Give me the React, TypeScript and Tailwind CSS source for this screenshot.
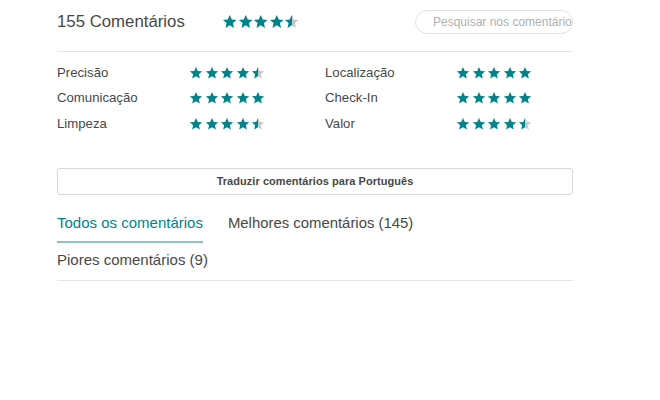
import React, { useId } from "react";

const STAR = "M12 1.5l3.1 6.9 7.4.7-5.6 5 1.7 7.4L12 17.6l-6.6 3.9 1.7-7.4-5.6-5 7.4-.7z";

function Star({ fill, size }: { fill: number; size: number }) {
  const id = useId().replace(/:/g, "");
  return (
    <svg width={size} height={size} viewBox="0 0 24 24" className="block">
      <defs>
        <linearGradient id={id} x1="0" x2="1" y1="0" y2="0">
          <stop offset={fill} stopColor="#008489" />
          <stop offset={fill} stopColor="#c8c8c8" />
        </linearGradient>
      </defs>
      <path d={STAR} fill={`url(#${id})`} />
    </svg>
  );
}

function Stars({ value, size = 14, gap = "gap-[1.5px]" }: { value: number; size?: number; gap?: string }) {
  return (
    <div className={`flex ${gap}`}>
      {[0, 1, 2, 3, 4].map((i) => {
        const f = Math.max(0, Math.min(1, value - i));
        return <Star key={i} fill={f === 1 ? 1 : f > 0 ? 0.5 : 0} size={size} />;
      })}
    </div>
  );
}

function Row({ label, value, right }: { label: string; value: number; right?: boolean }) {
  return (
    <div className="flex items-center h-[25.5px]">
      <span className={`${right ? "w-[131px]" : "w-[132px]"} text-[13.2px] text-[#484848]`}>{label}</span>
      <Stars value={value} size={14} gap="gap-[1.5px]" />
    </div>
  );
}

export default function App() {
  return (
    <div className="w-[660px] h-[400px] bg-white" style={{ fontFamily: '"Liberation Sans", Arial, sans-serif' }}>
      <div className="ml-[57px] w-[516px]">
        <div className="flex items-center h-[52px] border-b border-[#e4e4e4] pb-[8px]">
          <span className="text-[16.8px] text-[#484848] w-[165px]">155 Comentários</span>
          <Stars value={4.5} size={15.5} gap="gap-[0px]" />
          <div className="ml-auto mr-0 w-[158px] h-[24px] rounded-full border border-[#e0e0e0] flex items-center px-[17px] overflow-hidden">
            <span className="text-[12px] text-[#b0b0b0] whitespace-nowrap">Pesquisar nos comentário</span>
          </div>
        </div>
        <div className="grid grid-cols-2 w-[476px] mt-[8px] gap-x-[4px]">
          <div className="flex flex-col">
            <Row label="Precisão" value={4.5} />
            <Row label="Comunicação" value={5} />
            <Row label="Limpeza" value={4.5} />
          </div>
          <div className="flex flex-col ml-[28px]">
            <Row label="Localização" value={5} right />
            <Row label="Check-In" value={5} right />
            <Row label="Valor" value={4.5} right />
          </div>
        </div>
        <button className="mt-[31px] w-full h-[27px] rounded-[3px] border border-[#d6d6d6] text-[11px] font-bold text-[#484848] tracking-[0.05px] flex items-center justify-center">
          Traduzir comentários para Português
        </button>
        <div className="flex mt-[16px] gap-[25px] text-[15px]">
          <div className="text-[#008489] pt-[1px] h-[32px] border-b-2 border-[#8cc2c3]">Todos os comentários</div>
          <div className="text-[#484848] pt-[1px] text-[14.9px]">Melhores comentários (145)</div>
        </div>
        <div className="text-[15px] text-[#484848] pt-[6px] h-[38px] border-b border-[#e4e4e4]">Piores comentários (9)</div>
      </div>
    </div>
  );
}
